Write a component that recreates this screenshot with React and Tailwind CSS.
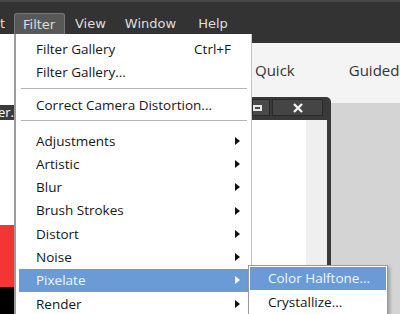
import React from "react";

const menuFont = { fontFamily: '"DejaVu Sans", sans-serif' };
const uiFont = { fontFamily: '"Open Sans", sans-serif' };

function Arrow({ white }) {
  return (
    <svg width="5" height="8" viewBox="0 0 5 8" className="shrink-0">
      <polygon points="0,0 5,4 0,8" fill={white ? "#ffffff" : "#111111"} />
    </svg>
  );
}

function Row({ label, shortcut, arrow, active, h = "h-[23.3px]" }) {
  return (
    <div
      className={`${h} ml-[3px] flex items-center pl-[17px] pr-[11px] ${
        active ? "bg-[#6a9bd6] text-[#f2f6fc]" : "text-[#161616]"
      }`}
    >
      <span className="flex-1 whitespace-nowrap">{label}</span>
      {shortcut && <span className="mr-[9px]">{shortcut}</span>}
      {arrow && <Arrow white={active} />}
    </div>
  );
}

function Separator({ h, top }) {
  return (
    <div className={`${h} ${top}`}>
      <div className="ml-[5px] mr-[4px] h-px bg-[#b4b4b4]" />
    </div>
  );
}

export default function App() {
  const subItems = [
    "Adjustments",
    "Artistic",
    "Blur",
    "Brush Strokes",
    "Distort",
    "Noise",
    "Pixelate",
    "Render",
  ];

  return (
    <div className="relative w-[400px] h-[314px] overflow-hidden bg-white flex flex-col">
      {/* Menu bar */}
      <div
        className="h-[34px] shrink-0 bg-[#333333] border-t-2 border-[#474747] flex items-end text-[13px] text-[#dedede]"
        style={menuFont}
      >
        <div className="w-[5px] h-[21px] leading-[22px] overflow-hidden flex justify-end">
          <span className="shrink-0">Select</span>
        </div>
        <div className="ml-[9px] w-[51px] h-[21px] leading-[21px] pl-[8px] bg-[#585858] border border-b-0 border-[#787878] rounded-t-[3px]">
          Filter
        </div>
        <div className="ml-[10px] h-[21px] leading-[22px]">View</div>
        <div className="ml-[19px] h-[21px] leading-[22px]">Window</div>
        <div className="ml-[22px] h-[21px] leading-[22px]">Help</div>
      </div>

      {/* Workspace */}
      <div className="flex flex-1 min-h-0">
        {/* Document window on the left */}
        <div className="w-[252px] flex flex-col bg-white">
          <div className="h-[71px]" />
          <div
            className="h-[15px] bg-[#3b3b3b] text-white text-[13px] leading-[15px] w-[14px] overflow-hidden flex justify-end"
            style={uiFont}
          >
            <span className="shrink-0">Layer.</span>
          </div>
          <div className="h-[105px]" />
          <div className="h-[62px] bg-[#f43535]" />
          <div className="flex-1 bg-black" />
        </div>

        {/* Right side */}
        <div className="flex-1 flex flex-col bg-[#f4f4f4]">
          <div className="h-[9px] bg-[#333333]" />
          <div
            className="h-[54px] flex items-center pl-[3px] text-[15px] text-[#333333]"
            style={uiFont}
          >
            <span>Quick</span>
            <span className="ml-[54px]">Guided</span>
          </div>
          <div className="flex flex-1">
            <div className="w-[79px] flex flex-col">
              <div className="h-[21px] bg-[#393939] rounded-tr-[5px] flex items-center pr-[7px] gap-[2px]">
                <div className="w-[18px] h-[17px] bg-[#4a4a4a] border border-[#2a2a2a] flex items-center">
                  <div className="w-[9px] h-[6px] border-2 border-[#e8e8e8]" />
                </div>
                <div className="w-[51px] h-[17px] bg-[#454545] border border-[#2a2a2a] flex items-center justify-center">
                  <svg width="12" height="10" viewBox="0 0 12 10">
                    <path d="M2 1 L10 9 M10 1 L2 9" stroke="#f2f2f2" strokeWidth="2.4" />
                  </svg>
                </div>
              </div>
              <div className="flex flex-1 border-r-[4px] border-t-[2px] border-[#3a3a3a]">
                <div className="flex-1 bg-white" />
                <div className="w-[21px] bg-[#efefef]" />
              </div>
            </div>
            <div className="flex-1 mt-[6px] bg-[#d4d4d4]" />
          </div>
        </div>
      </div>

      {/* Filter menu */}
      <div
        className="absolute left-[14px] top-[34px] w-[238px] h-[290px] bg-white border-l-2 border-l-[#9c9c9c] border-r border-r-[#c4c4c4] pt-[4px] text-[13.5px]"
        style={uiFont}
      >
        <Row label="Filter Gallery" shortcut="Ctrl+F" h="h-[23px]" />
        <Row label="Filter Gallery..." h="h-[23px]" />
        <Separator h="h-[10px]" top="pt-[4px]" />
        <Row label="Correct Camera Distortion..." h="h-[23px]" />
        <Separator h="h-[12px]" top="pt-[3px]" />
        {subItems.map((s) => (
          <Row key={s} label={s} arrow active={s === "Pixelate"} />
        ))}
      </div>

      {/* Pixelate submenu */}
      <div
        className="absolute left-[248px] top-[265px] w-[140px] h-[60px] bg-white border border-[#9a9a9a] pt-[1px] px-[1px] text-[13.5px] shadow-[2px_2px_3px_rgba(0,0,0,0.25)]"
        style={uiFont}
      >
        <div className="h-[23px] flex items-center pl-[18px] bg-[#6a9bd6] text-[#f2f6fc] whitespace-nowrap">
          Color Halftone...
        </div>
        <div className="h-[23.3px] flex items-center pl-[18px] text-[#161616] whitespace-nowrap">
          Crystallize...
        </div>
      </div>
    </div>
  );
}
